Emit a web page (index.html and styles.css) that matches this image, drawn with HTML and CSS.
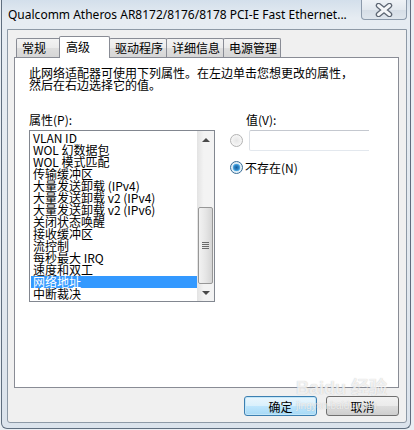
FILE: index.html
```html
<!DOCTYPE html>
<html lang="zh-CN">
<head>
<meta charset="utf-8">
<link rel="stylesheet" href="styles.css">
</head>
<body>
<div class="window">
  <div class="titlebar">
    <span class="title">Qualcomm Atheros AR8172/8176/8178 PCI-E Fast Ethernet...</span>
    <div class="close">
      <svg width="18" height="14" viewBox="0 0 18 14">
        <path d="M3.5 2.5 L14.5 11.5 M14.5 2.5 L3.5 11.5" stroke="#5d6673" stroke-width="5.5" stroke-linecap="round"/>
        <path d="M3.5 2.5 L14.5 11.5 M14.5 2.5 L3.5 11.5" stroke="#f4f6f8" stroke-width="3" stroke-linecap="round"/>
      </svg>
    </div>
  </div>
  <div class="client">
    <div class="tabs">
      <div class="tab">常规</div>
      <div class="tab active">高级</div>
      <div class="tab">驱动程序</div>
      <div class="tab">详细信息</div>
      <div class="tab">电源管理</div>
    </div>
    <div class="panel">
      <p class="desc">此网络适配器可使用下列属性。在左边单击您想更改的属性，<br>然后在右边选择它的值。</p>
      <div class="cols">
        <div class="left">
          <div class="label">属性(P):</div>
          <div class="listbox">
            <ul class="items">
              <li>VLAN ID</li>
              <li>WOL 幻数据包</li>
              <li>WOL 模式匹配</li>
              <li>传输缓冲区</li>
              <li>大量发送卸载 (IPv4)</li>
              <li>大量发送卸载 v2 (IPv4)</li>
              <li>大量发送卸载 v2 (IPv6)</li>
              <li>关闭状态唤醒</li>
              <li>接收缓冲区</li>
              <li>流控制</li>
              <li>每秒最大 IRQ</li>
              <li>速度和双工</li>
              <li class="sel">网络地址</li>
              <li>中断裁决</li>
            </ul>
            <div class="scrollbar">
              <div class="sb-btn"><span class="arrow up"></span></div>
              <div class="sb-track"></div>
              <div class="sb-thumb"><span class="grip"></span><span class="grip"></span><span class="grip"></span><span class="grip"></span></div>
              <div class="sb-btn"><span class="arrow down"></span></div>
            </div>
          </div>
        </div>
        <div class="right">
          <div class="label vlabel">值(V):</div>
          <div class="row first"><span class="radio"></span><div class="textbox"></div></div>
          <div class="row second"><span class="radio on"></span><span class="rtext">不存在(N)</span></div>
        </div>
      </div>
    </div>
    <div class="buttons">
      <button class="btn default">确定</button>
      <button class="btn">取消</button>
    </div>
  </div>
  <div class="watermark"><span class="wm-big">Bai<span class="paw">du</span> 经验</span><span class="wm-small">jingyan.baidu.com</span></div>
</div>
</body>
</html>
```
FILE: styles.css
```css
* { box-sizing: border-box; }
html, body { margin: 0; padding: 0; }
body {
  width: 414px;
  height: 430px;
  overflow: hidden;
  background: #e9eef3;
  font-family: "Noto Sans CJK SC", "Noto Sans", sans-serif;
  font-size: 12px;
  color: #000;
}
.window {
  position: relative;
  width: 410px;
  height: 429px;
  margin-left: 1px;
  border: 1px solid #5f6e7f;
  border-top: none;
  border-radius: 0 0 6px 6px;
  background: linear-gradient(180deg, #d3dfeb 0%, #e6ecf2 18px, #e3e9ef 60%, #dbe3ec 100%);
}
.titlebar {
  height: 29px;
  display: flex;
  align-items: flex-start;
  justify-content: space-between;
  padding-left: 6px;
  padding-right: 3px;
}
.title {
  font-family: "Noto Sans", sans-serif;
  font-size: 12px;
  line-height: 16px;
  margin-top: 7px;
  color: #000;
  white-space: nowrap;
}
.close {
  width: 46px;
  height: 20px;
  border: 1px solid #8c9aab;
  border-top: none;
  border-radius: 0 0 4px 4px;
  background: linear-gradient(180deg, #eef2f6 0%, #e2e8ee 50%, #d5dde6 51%, #dfe6ed 100%);
  display: flex;
  align-items: center;
  justify-content: center;
}
.client {
  width: 400px;
  height: 394px;
  margin-left: 5px;
  border: 1px solid #8d99a6;
  border-radius: 0 0 3px 3px;
  background: #f0f0f0;
  display: flex;
  flex-direction: column;
}
.tabs {
  display: flex;
  align-items: flex-end;
  height: 27px;
  padding-left: 8px;
  position: relative;
  z-index: 1;
}
.tab {
  height: 19px;
  min-width: 46px;
  padding: 0 3px 0 5px;
  border: 1px solid #898c95;
  border-bottom: none;
  border-radius: 2px 2px 0 0;
  background: linear-gradient(180deg, #f3f3f3 0%, #ebebeb 50%, #dedede 51%, #d6d6d6 100%);
  line-height: 18px;
  white-space: nowrap;
  margin-right: -1px;
}
.tab.active {
  height: 22px;
  margin: 0 -1px -1px -2px;
  padding-left: 6px;
  min-width: 51px;
  background: #fff;
  line-height: 20px;
  position: relative;
  z-index: 2;
}
.panel {
  height: 331px;
  margin: 0 7px 0 6px;
  border: 1px solid #898c95;
  background: #fff;
  padding: 9px 0 0 14px;
}
.desc {
  margin: 0;
  line-height: 12px;
  white-space: nowrap;
}
.cols {
  display: flex;
  margin-top: 23px;
}
.label {
  line-height: 12px;
  height: 12px;
}
.left { width: 186px; }
.listbox {
  margin-top: 4px;
  width: 186px;
  height: 172px;
  border: 1px solid #828790;
  display: flex;
}
.items {
  list-style: none;
  margin: 0;
  padding: 1px 0 0 1px;
  flex: 1;
  overflow: hidden;
}
.items li {
  height: 12px;
  line-height: 12px;
  padding-left: 2px;
  white-space: nowrap;
}
.items li.sel {
  background: #3399ff;
  color: #fff;
}
.scrollbar {
  width: 17px;
  display: flex;
  flex-direction: column;
  background: linear-gradient(90deg, #e3e3e3 0%, #f3f3f3 40%, #f3f3f3 100%);
}
.sb-btn {
  height: 17px;
  display: flex;
  align-items: center;
  justify-content: center;
}
.arrow {
  width: 0;
  height: 0;
  border-left: 4px solid transparent;
  border-right: 4px solid transparent;
}
.arrow.up { border-bottom: 4px solid #4a4a4a; }
.arrow.down { border-top: 4px solid #4a4a4a; }
.sb-track { height: 59px; }
.sb-thumb {
  height: 77px;
  margin: 0 1px;
  border: 1px solid #979797;
  border-radius: 2px;
  background: linear-gradient(90deg, #f2f2f2 0%, #e6e6e6 50%, #d5d5d5 100%);
  display: flex;
  flex-direction: column;
  align-items: center;
  justify-content: center;
  gap: 1px;
}
.grip {
  width: 7px;
  height: 1px;
  background: #6a6a6a;
}
.right {
  margin-left: 15px;
}
.vlabel { padding-left: 16px; }
.row {
  display: flex;
  align-items: center;
}
.row.first {
  margin-top: 4px;
  height: 21px;
}
.row.second {
  margin-top: 10px;
  height: 13px;
}
.radio {
  width: 13px;
  height: 13px;
  border-radius: 50%;
  border: 1px solid #b3b3b3;
  background: radial-gradient(circle at 50% 50%, #e6e6e6 0%, #f4f4f4 60%, #fafafa 100%);
  flex: none;
}
.radio.on {
  border-color: #3a6e96;
  background: radial-gradient(circle at 50% 50%, #1b5e98 0%, #2d86c8 30%, #5db3e6 45%, #dcecf6 52%, #f4f8fb 100%);
}
.textbox {
  margin-left: 6px;
  width: 120px;
  height: 21px;
  border-top: 1px solid #c4c8cf;
  border-left: 1px solid #dde1e6;
  border-bottom: 1px solid #e3e8ee;
  border-radius: 2px 0 0 2px;
  background: #fff;
}
.rtext {
  margin-left: 2px;
  line-height: 12px;
}
.buttons {
  display: flex;
  justify-content: flex-end;
  gap: 9px;
  margin: 8px 7px 0 0;
}
.btn {
  width: 73px;
  height: 20px;
  padding: 0;
  font-family: "Noto Sans CJK SC", sans-serif;
  font-size: 12px;
  color: #000;
  border: 1px solid #707070;
  border-radius: 3px;
  background: linear-gradient(180deg, #f2f2f2 0%, #ebebeb 50%, #dddddd 51%, #cfcfcf 100%);
}
.btn.default {
  border-color: #3c7fb1;
  background: linear-gradient(180deg, #eaf6fd 0%, #d9f0fc 50%, #bee6fd 51%, #a7d9f5 100%);
  box-shadow: inset 0 0 0 1px #c2e6f8;
}
.watermark {
  position: absolute;
  left: 294px;
  top: 378px;
  display: flex;
  flex-direction: column;
  pointer-events: none;
  color: rgba(255, 255, 255, 0.75);
}
.wm-big {
  font-family: "Liberation Sans", "Noto Sans CJK SC", sans-serif;
  font-size: 18px;
  font-weight: bold;
  line-height: 20px;
  text-shadow: 0 0 1px rgba(150, 150, 150, 0.6);
}
.wm-small {
  font-family: "Liberation Sans", sans-serif;
  font-size: 10px;
  line-height: 10px;
  margin-top: 3px;
  text-shadow: 0 0 1px rgba(150, 150, 150, 0.6);
}
```
